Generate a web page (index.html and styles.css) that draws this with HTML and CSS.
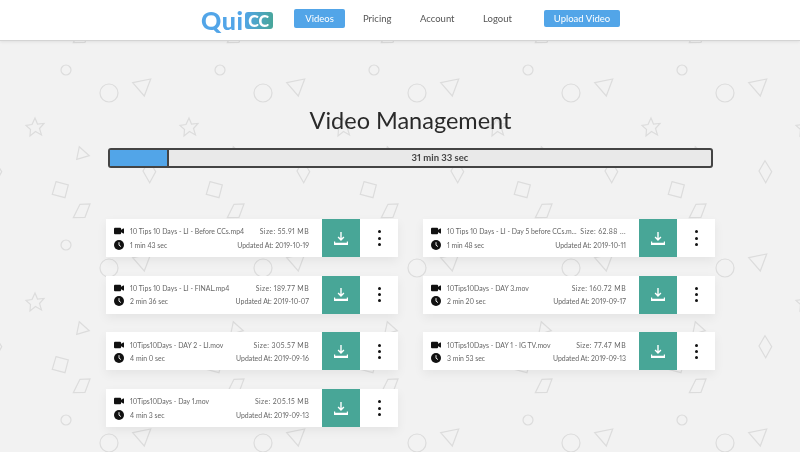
FILE: index.html
```html
<!DOCTYPE html>
<html lang="en">
<head>
    <meta charset="UTF-8">
    <title>Video Management</title>
    <link rel="stylesheet" href="styles.css">
</head>
<body>
    <svg class="bg-pattern" width="100%" height="100%">
        <defs>
            <pattern id="shapes" x="0" y="50" width="154" height="175" patternUnits="userSpaceOnUse">
                <g transform="translate(0,-50)" fill="none" stroke="#dcdcdc" stroke-width="1.2">
                    <circle cx="66" cy="70" r="5"/>
                    <circle cx="109" cy="93" r="9"/>
                    <polygon points="132.7,82.7 150.7,79 144.3,96"/>
                    <polygon points="35,118 37.5,124 44,123.5 39.5,128.5 41.5,135 35.5,131.5 30,136 30.5,129.5 26,125.5 32,124.5"/>
                    <polygon points="79.3,146.7 89.3,155.7 76.7,159.3"/>
                    <polygon points="149,160.7 155.7,171.7 149.7,182.7 143,171"/>
                    <polygon points="-5,160.7 1.7,171.7 -4.3,182.7 -11,171"/>
                    <polygon points="56,181.7 68.3,185 65,197.7 52.3,194.3"/>
                    <polygon points="80,204.3 90,204 85,217.3 73.3,217.7"/>
                </g>
            </pattern>
        </defs>
        <rect width="100%" height="100%" fill="url(#shapes)"/>
    </svg>

    <header class="navbar">
        <div class="logo"><span class="logo-text">Qui</span><span class="logo-badge">CC</span></div>
        <a class="nav-link active">Videos</a>
        <a class="nav-link pricing">Pricing</a>
        <a class="nav-link account">Account</a>
        <a class="nav-link logout">Logout</a>
        <a class="upload-btn">Upload Video</a>
    </header>

    <main class="content">
        <h1 class="title">Video Management</h1>
        <div class="usage-bar">
            <div class="usage-fill"></div>
            <div class="usage-label">31 min 33 sec</div>
        </div>

        <svg width="0" height="0" class="defs">
            <symbol id="i-video" viewBox="0 0 12 9">
                <rect x="0" y="0.5" width="8.500" height="8" rx="1.200"/>
                <path d="M8.200 3.400 11 1.500c.4-.3 1-.1 1 .4v5.200c0 .5-.6.7-1 .4L8.200 5.600z"/>
            </symbol>
            <symbol id="i-clock" viewBox="0 0 12 12">
                <circle cx="6" cy="6" r="6"/>
                <path d="M6 2.600V6.200L8.300 7.900" fill="none" stroke="#fff" stroke-width="1.100"/>
            </symbol>
            <symbol id="i-download" viewBox="0 0 14 13">
                <path d="M6.300 0h1.400v6.300l1.700-1.700 1 1L7 9 3.600 5.600l1-1 1.700 1.700z"/>
                <path d="M0 9.500h1.200v1.300h11.600V9.500H14V13H0z"/>
            </symbol>
        </svg>

        <section class="video-list">
            <article class="video-card">
                <div class="video-info">
                    <div class="info-row">
                        <svg class="icon"><use href="#i-video"/></svg>
                        <span class="name">10 Tips 10 Days - LI - Before CCs.mp4</span>
                        <span class="meta size">Size: 55.91 MB</span>
                    </div>
                    <div class="info-row">
                        <svg class="icon"><use href="#i-clock"/></svg>
                        <span class="name">1 min 43 sec</span>
                        <span class="meta">Updated At: 2019-10-19</span>
                    </div>
                </div>
                <button class="download-btn"><svg class="download-icon"><use href="#i-download"/></svg></button>
                <div class="more"><i></i><i></i><i></i></div>
            </article>
            <article class="video-card">
                <div class="video-info">
                    <div class="info-row">
                        <svg class="icon"><use href="#i-video"/></svg>
                        <span class="name">10 Tips 10 Days - LI - Day 5 before CCs.m...</span>
                        <span class="meta size">Size: 62.88 ...</span>
                    </div>
                    <div class="info-row">
                        <svg class="icon"><use href="#i-clock"/></svg>
                        <span class="name">1 min 48 sec</span>
                        <span class="meta">Updated At: 2019-10-11</span>
                    </div>
                </div>
                <button class="download-btn"><svg class="download-icon"><use href="#i-download"/></svg></button>
                <div class="more"><i></i><i></i><i></i></div>
            </article>
            <article class="video-card">
                <div class="video-info">
                    <div class="info-row">
                        <svg class="icon"><use href="#i-video"/></svg>
                        <span class="name">10 Tips 10 Days - LI - FINAL.mp4</span>
                        <span class="meta size">Size: 189.77 MB</span>
                    </div>
                    <div class="info-row">
                        <svg class="icon"><use href="#i-clock"/></svg>
                        <span class="name">2 min 36 sec</span>
                        <span class="meta">Updated At: 2019-10-07</span>
                    </div>
                </div>
                <button class="download-btn"><svg class="download-icon"><use href="#i-download"/></svg></button>
                <div class="more"><i></i><i></i><i></i></div>
            </article>
            <article class="video-card">
                <div class="video-info">
                    <div class="info-row">
                        <svg class="icon"><use href="#i-video"/></svg>
                        <span class="name">10Tips10Days - DAY 3.mov</span>
                        <span class="meta size">Size: 160.72 MB</span>
                    </div>
                    <div class="info-row">
                        <svg class="icon"><use href="#i-clock"/></svg>
                        <span class="name">2 min 20 sec</span>
                        <span class="meta">Updated At: 2019-09-17</span>
                    </div>
                </div>
                <button class="download-btn"><svg class="download-icon"><use href="#i-download"/></svg></button>
                <div class="more"><i></i><i></i><i></i></div>
            </article>
            <article class="video-card">
                <div class="video-info">
                    <div class="info-row">
                        <svg class="icon"><use href="#i-video"/></svg>
                        <span class="name">10Tips10Days - DAY 2 - LI.mov</span>
                        <span class="meta size">Size: 305.57 MB</span>
                    </div>
                    <div class="info-row">
                        <svg class="icon"><use href="#i-clock"/></svg>
                        <span class="name">4 min 0 sec</span>
                        <span class="meta">Updated At: 2019-09-16</span>
                    </div>
                </div>
                <button class="download-btn"><svg class="download-icon"><use href="#i-download"/></svg></button>
                <div class="more"><i></i><i></i><i></i></div>
            </article>
            <article class="video-card">
                <div class="video-info">
                    <div class="info-row">
                        <svg class="icon"><use href="#i-video"/></svg>
                        <span class="name">10Tips10Days - DAY 1 - IG TV.mov</span>
                        <span class="meta size">Size: 77.47 MB</span>
                    </div>
                    <div class="info-row">
                        <svg class="icon"><use href="#i-clock"/></svg>
                        <span class="name">3 min 53 sec</span>
                        <span class="meta">Updated At: 2019-09-13</span>
                    </div>
                </div>
                <button class="download-btn"><svg class="download-icon"><use href="#i-download"/></svg></button>
                <div class="more"><i></i><i></i><i></i></div>
            </article>
            <article class="video-card">
                <div class="video-info">
                    <div class="info-row">
                        <svg class="icon"><use href="#i-video"/></svg>
                        <span class="name">10Tips10Days - Day 1.mov</span>
                        <span class="meta size">Size: 205.15 MB</span>
                    </div>
                    <div class="info-row">
                        <svg class="icon"><use href="#i-clock"/></svg>
                        <span class="name">4 min 3 sec</span>
                        <span class="meta">Updated At: 2019-09-13</span>
                    </div>
                </div>
                <button class="download-btn"><svg class="download-icon"><use href="#i-download"/></svg></button>
                <div class="more"><i></i><i></i><i></i></div>
            </article>
        </section>
    </main>
</body>
</html>
```

FILE: styles.css
```css
html, body {
    width: 100%;
    height: 452px;
    margin: 0;
    padding: 0;
    overflow: hidden;
    background: #f2f2f2;
    font-family: "Lato", "Open Sans", sans-serif;
    font-variant-numeric: proportional-nums;
}
.bg-pattern {
    position: absolute;
    top: 0;
    left: 0;
    filter: blur(.4px);
}
.defs {
    position: absolute;
}

.navbar {
    position: relative;
    height: 41px;
    box-sizing: border-box;
    padding: 0 0 3px 201px;
    display: flex;
    align-items: center;
    background: #fff;
    border-bottom: 1px solid #d4d4d4;
    box-shadow: 0 1px 3px rgba(0,0,0,.08);
    font-size: 9.500px;
    color: #555;
}
.navbar > * {
    filter: blur(.35px);
}
.logo {
    width: 72px;
    margin: 2px 21px 0 0;
    display: flex;
    align-items: center;
}
.logo-text {
    font-size: 25px;
    font-weight: 900;
    color: #52a5e8;
    line-height: 26px;
    letter-spacing: .6px;
}
.logo-badge {
    margin-left: 1px;
    width: 28px;
    height: 17px;
    margin-top: 2px;
    border-radius: 3px;
    background: linear-gradient(100deg, #52a5e8, #48a697);
    color: #fff;
    font-size: 16px;
    font-weight: 900;
    line-height: 17px;
    text-align: center;
}
.nav-link {
    display: block;
}
.nav-link.active {
    width: 51px;
    height: 19px;
    line-height: 19px;
    margin-right: 18px;
    text-align: center;
    color: #fff;
    background: #52a5e8;
    border-radius: 2px;
}
.pricing { width: 57px; }
.account { width: 63px; }
.logout { width: 61px; }
.upload-btn {
    width: 76px;
    height: 17px;
    line-height: 17px;
    text-align: center;
    color: #fff;
    background: #52a5e8;
    border-radius: 2px;
}

.content {
    position: relative;
    padding: 0 85px 0 106px;
    filter: blur(.35px);
}
.title {
    margin: 64px 0 0;
    height: 43px;
    font-size: 23.500px;
    line-height: 30px;
    font-weight: 400;
    color: #2a2a2a;
    text-align: center;
}
.usage-bar {
    margin: 0 2px;
    height: 20px;
    box-sizing: border-box;
    display: flex;
    border: 2px solid #444;
    border-radius: 3px;
    background: #e9e9e9;
}
.usage-fill {
    width: 57px;
    background: #52a5e8;
    border-right: 2px solid #444;
}
.usage-label {
    flex: 1;
    font-size: 9.500px;
    font-weight: 700;
    line-height: 15px;
    color: #444;
    text-align: center;
}

.video-list {
    margin-top: 51px;
    display: grid;
    grid-template-columns: 292px 292px;
    column-gap: 25px;
    row-gap: 18.700px;
}
.video-card {
    height: 38px;
    display: flex;
    align-items: center;
    background: #fff;
    box-shadow: 0 4px 10px rgba(0,0,0,.06);
}
.video-info {
    flex: 1;
    min-width: 0;
    padding: 0 13px 0 8px;
    font-size: 6.900px;
    color: #666;
}
.info-row {
    height: 13.500px;
    display: flex;
    align-items: center;
    white-space: nowrap;
}
.icon {
    flex: none;
    width: 10px;
    height: 10px;
    margin-right: 6px;
    fill: #111;
}
.meta {
    margin-left: auto;
    padding-left: 2px;
}
.size {
    letter-spacing: .4px;
}
.download-btn {
    flex: none;
    width: 38px;
    height: 38px;
    padding: 0;
    border: 0;
    background: #48a697;
    display: flex;
    align-items: center;
    justify-content: center;
}
.download-icon {
    width: 14px;
    height: 13px;
    fill: #fff;
}
.more {
    width: 38px;
    display: flex;
    flex-direction: column;
    align-items: center;
    gap: 3.300px;
}
.more i {
    width: 3px;
    height: 3px;
    border-radius: 50%;
    background: #111;
}
```
